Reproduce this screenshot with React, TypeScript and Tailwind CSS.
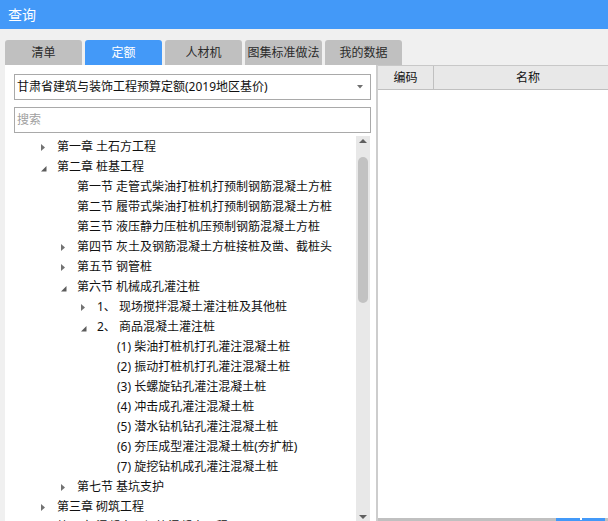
import type { ReactNode } from "react";

type TreeRow = {
  level: number;
  label: ReactNode;
  state?: "open" | "closed";
};

const tabs = ["清单", "定额", "人材机", "图集标准做法", "我的数据"];

const rows: TreeRow[] = [
  { level: 0, label: "第一章 土石方工程", state: "closed" },
  { level: 0, label: "第二章 桩基工程", state: "open" },
  { level: 1, label: "第一节 走管式柴油打桩机打预制钢筋混凝土方桩" },
  { level: 1, label: "第二节 履带式柴油打桩机打预制钢筋混凝土方桩" },
  { level: 1, label: "第三节 液压静力压桩机压预制钢筋混凝土方桩" },
  { level: 1, label: "第四节 灰土及钢筋混凝土方桩接桩及凿、截桩头", state: "closed" },
  { level: 1, label: "第五节 钢管桩", state: "closed" },
  { level: 1, label: "第六节 机械成孔灌注桩", state: "open" },
  { level: 2, label: "1、 现场搅拌混凝土灌注桩及其他桩", state: "closed" },
  { level: 2, label: "2、 商品混凝土灌注桩", state: "open" },
  { level: 3, label: "(1) 柴油打桩机打孔灌注混凝土桩" },
  { level: 3, label: "(2) 振动打桩机打孔灌注混凝土桩" },
  { level: 3, label: "(3) 长螺旋钻孔灌注混凝土桩" },
  { level: 3, label: "(4) 冲击成孔灌注混凝土桩" },
  { level: 3, label: "(5) 潜水钻机钻孔灌注混凝土桩" },
  { level: 3, label: "(6) 夯压成型灌注混凝土桩(夯扩桩)" },
  { level: 3, label: "(7) 旋挖钻机成孔灌注混凝土桩" },
  { level: 1, label: "第七节 基坑支护", state: "closed" },
  { level: 0, label: "第三章 砌筑工程", state: "closed" },
  { level: 0, label: "第四章 混凝土及钢筋混凝土工程", state: "closed" },
];

const indents = ["pl-[27px]", "pl-[47px]", "pl-[67px]", "pl-[87px]"];

export default function App() {
  return (
    <div className="flex h-[521px] w-[608px] flex-col overflow-hidden bg-[#f0f0f0] font-['Noto_Sans','Noto_Sans_CJK_SC',sans-serif] text-[12px] text-[#111]">
      <header className="flex h-[29px] shrink-0 items-center bg-[#4399f8] px-[8px] text-[14px] text-white">
        查询
      </header>

      <nav className="flex h-[36px] shrink-0 items-end gap-[3px] pl-[5px]">
        {tabs.map((tab) => (
          <div
            key={tab}
            className={`flex h-[25px] w-[77px] items-center justify-center whitespace-nowrap rounded-t-[3px] leading-none ${
              tab === "定额" ? "bg-[#4399f8] text-white" : "bg-[#c0c0c0] text-[#2b2b2b]"
            }`}
          >
            {tab}
          </div>
        ))}
      </nav>

      <div className="flex min-h-0 flex-1">
        <section className="ml-[5px] flex w-[373px] shrink-0 flex-col border-r-2 border-[#cdcdcd] bg-white pl-[9px] pr-[5px] pt-[9px]">
          <div className="flex h-[26px] items-center justify-between border border-[#a9a9a9] pl-[2px] pr-[7px]">
            <span className="leading-none">甘肃省建筑与装饰工程预算定额(2019地区基价)</span>
            <svg width="6" height="4" viewBox="0 0 6 4">
              <polygon points="0,0 6,0 3,3.5" fill="#707070" />
            </svg>
          </div>
          <div className="mt-[7px] flex h-[26px] items-center border border-[#a9a9a9] pl-[2px] leading-none text-[#a0a0a0]">
            搜索
          </div>

          <div className="mt-[2px] flex min-h-0 flex-1">
            <ul className="min-w-0 flex-1 pt-[2px]">
              {rows.map((row, i) => (
                <li
                  key={i}
                  className={`flex h-[20px] items-center whitespace-nowrap ${indents[row.level]}`}
                >
                  <span className="flex w-[16px] shrink-0 items-center">
                    {row.state === "closed" && (
                      <svg width="4" height="7" viewBox="0 0 4 7" className="mt-[1px]">
                        <polygon points="0,0 4,3.5 0,7" fill="#737373" />
                      </svg>
                    )}
                    {row.state === "open" && (
                      <svg width="6" height="6" viewBox="0 0 6 6" className="mt-[4px]">
                        <polygon points="5.5,0 5.5,5.5 0,5.5" fill="#5c5c5c" />
                      </svg>
                    )}
                  </span>
                  <span className="leading-[20px]">{row.label}</span>
                </li>
              ))}
            </ul>

            <div className="mr-[1px] mt-[1px] flex w-[14px] shrink-0 flex-col items-center bg-[#e8e8e8] pb-[2px] pt-[3px]">
              <svg width="8" height="4" viewBox="0 0 8 4">
                <polygon points="0,4 4,0 8,4" fill="#5f5f5f" />
              </svg>
              <div className="mt-[14px] h-[146px] w-[10px] rounded-full bg-[#c2c2c2]" />
              <div className="flex-1" />
              <svg width="8" height="4" viewBox="0 0 8 4">
                <polygon points="0,0 8,0 4,4" fill="#5f5f5f" />
              </svg>
            </div>
          </div>
        </section>

        <section className="flex min-w-0 flex-1 flex-col bg-white">
          <div className="flex h-[25px] shrink-0 border-b border-t border-b-[#c0c0c0] border-t-[#c8c8c8] bg-[#e8e8e8] leading-none">
            <div className="flex w-[56px] items-center justify-center border-r border-[#c0c0c0]">编码</div>
            <div className="flex flex-1 items-center justify-center pl-[14px]">名称</div>
          </div>
          <div className="h-[428px] shrink-0" />
          <div className="flex h-[20px] shrink-0 bg-[#c0c0c0]">
            <div className="w-[178px]" />
            <div className="flex h-[20px] w-[49px] justify-center bg-[#4399f8]">
              <div className="h-[2px] w-[2px] bg-white" />
            </div>
          </div>
        </section>
      </div>
    </div>
  );
}
